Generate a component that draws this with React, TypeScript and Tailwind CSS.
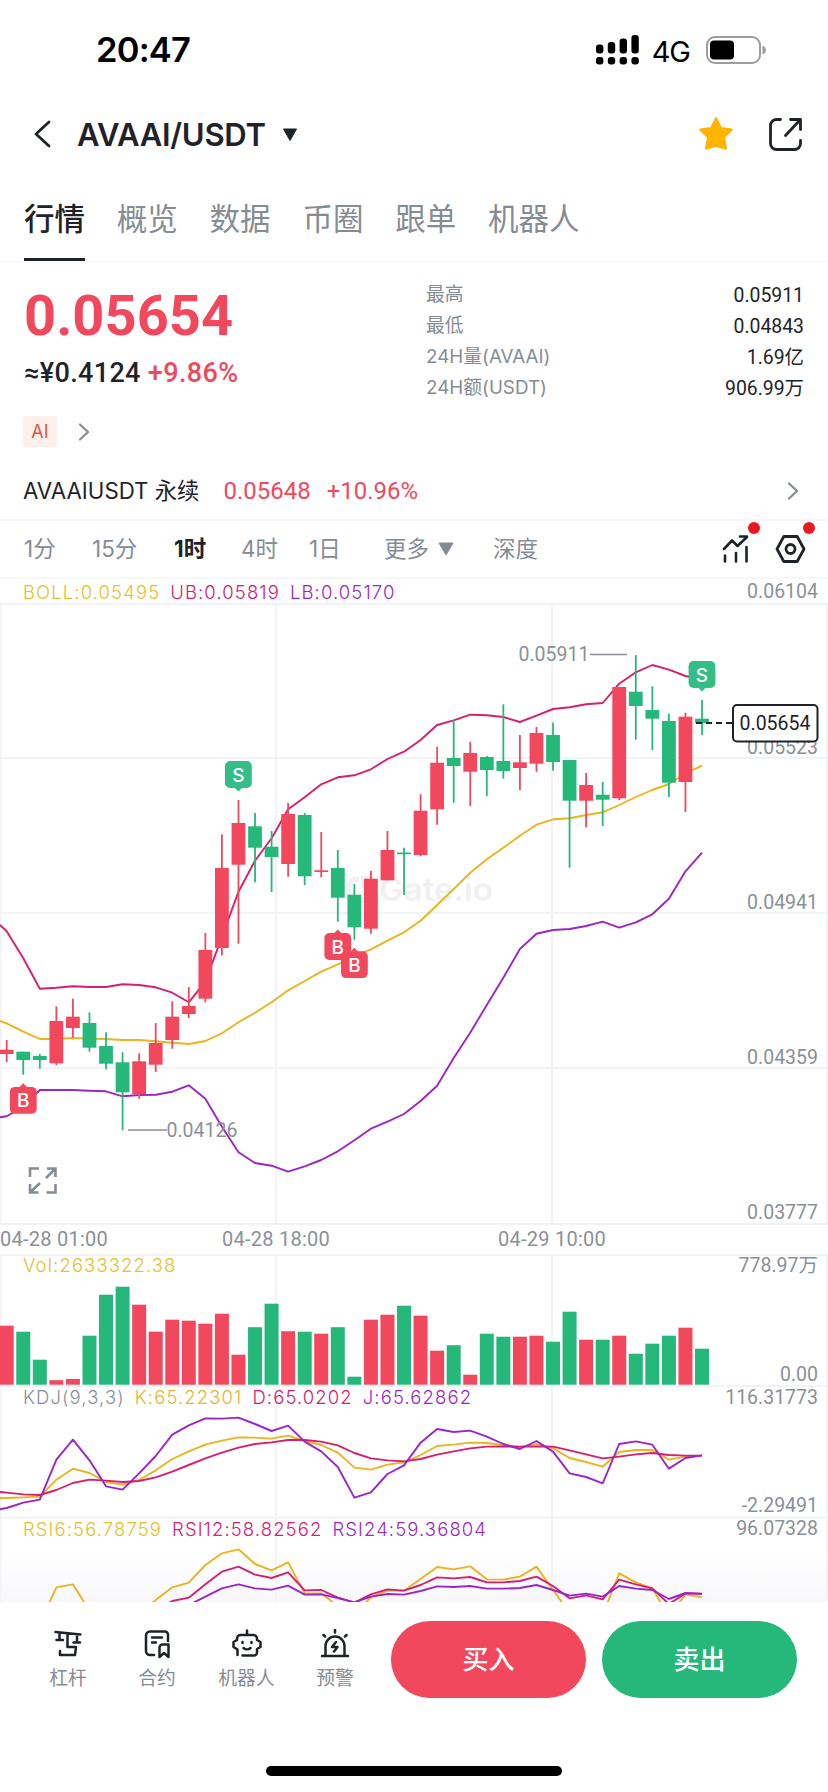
import React from 'react'

const UP = '#f1485d'
const DOWN = '#26b87a'
const YELLOW = '#ebb31d'
const PINK = '#d6206f'
const PURPLE = '#9a26c9'
const GRID = '#f2f3f7'

const STEP = 16.555
const cx = (i: number) => 6.7 + STEP * i

// [direction, high, body top, body bottom, low]
type Candle = [string, number, number, number, number]

const candles: Candle[] = [
  ['r', 1040, 1049.7, 1054, 1062],
  ['g', 1051.7, 1051.7, 1060, 1074.7],
  ['g', 1054, 1056, 1060, 1068.7],
  ['r', 1006.3, 1021, 1063.3, 1065.3],
  ['r', 998.7, 1016.7, 1028, 1037.7],
  ['g', 1012.3, 1023, 1047.7, 1051.7],
  ['g', 1032.3, 1046, 1063.7, 1069.3],
  ['g', 1052.3, 1062.3, 1092.3, 1130.3],
  ['r', 1053.3, 1061.3, 1094.3, 1098.7],
  ['r', 1023, 1043, 1064.7, 1072],
  ['r', 1001.3, 1016.7, 1040, 1048.7],
  ['r', 987, 1006, 1014, 1018],
  ['r', 933, 950, 998.7, 1002.3],
  ['r', 834.3, 868, 948, 955.3],
  ['r', 800, 823, 864.7, 943.7],
  ['g', 813, 826.3, 847.7, 882.3],
  ['g', 831, 846.7, 857, 892],
  ['r', 803, 814, 864, 876.7],
  ['g', 813, 815, 876.3, 885],
  ['r', 832, 870.3, 872, 877.3],
  ['g', 850, 868, 897.7, 921.7],
  ['g', 884, 894.7, 927.3, 939.7],
  ['r', 871, 878.7, 928.7, 933.7],
  ['r', 831, 850, 880.3, 880.3],
  ['g', 847.7, 852.5, 854.2, 895],
  ['r', 794.3, 810.7, 855, 856.3],
  ['r', 746.7, 762.7, 809.3, 824.7],
  ['g', 719.7, 758, 766, 802.7],
  ['r', 741.7, 753, 771.7, 806],
  ['g', 756, 757, 770, 796.3],
  ['g', 704.3, 761, 771, 778.7],
  ['r', 735, 762.3, 768, 790.3],
  ['r', 727, 733, 763.7, 771.7],
  ['g', 722.7, 735, 762, 770.7],
  ['g', 760, 760, 800.7, 867.7],
  ['r', 773, 785, 800.7, 827.3],
  ['g', 782, 794.7, 799.7, 826],
  ['r', 687, 687, 798.3, 800],
  ['g', 655, 691.7, 706, 739.7],
  ['g', 686.3, 710, 718.7, 750],
  ['g', 713.7, 721, 782.7, 797],
  ['r', 712.7, 716.7, 782, 812],
  ['g', 700, 718.7, 723, 735],
]

const upperBand = [931.3, 958.3, 988.7, 987.7, 986.3, 987, 987, 984.3, 985, 987.3, 992.7, 1002.3, 981.7, 937, 891.7, 860.7, 838.3, 809.3, 797.3, 784.3, 777.3, 775.3, 769.3, 759, 751.7, 740, 725, 720.3, 714.7, 715.3, 717, 722, 715.7, 709, 707.3, 704.3, 703, 683.7, 672.3, 665, 669.7, 676, 679]
const middleBand = [1023.3, 1031.7, 1039, 1039, 1038, 1038.7, 1039, 1040, 1040, 1041.3, 1042.7, 1044, 1041, 1033.3, 1022.3, 1012.7, 1002.3, 990.3, 981, 971.7, 964.3, 956, 949.3, 940.7, 932.3, 920.7, 905, 889, 872.7, 859.3, 847.7, 835.7, 824.7, 819.3, 818.3, 815, 812.3, 805, 797, 790, 784, 773.3, 765.7]
const lowerBand = [1116.3, 1106.7, 1090, 1090, 1090, 1090.7, 1091.3, 1096.3, 1095, 1094.7, 1091.7, 1085.3, 1098.7, 1126.7, 1152.3, 1163, 1165.7, 1171.7, 1166.3, 1160, 1151.3, 1140.3, 1128.7, 1121.7, 1114, 1101, 1085.7, 1058, 1032.7, 1005, 977.7, 949, 933.7, 930, 929, 926, 921.7, 927.7, 922.3, 914.3, 898.7, 871.3, 852.7]

const volumes = [59, 53, 25, 4.5, 5.7, 49, 90, 98, 80, 53, 65, 64, 61, 71, 30, 57.5, 81, 53.5, 53, 51, 57.5, 8, 65, 70, 79, 69, 34, 39.5, 10, 51, 48, 48, 49, 43, 73, 45, 45, 49, 31, 41, 49, 57, 36]

// oscillator series are kept in thirds of a pixel from the top of the volume pane
const kLine = [774, 772, 770, 719, 686, 699, 726, 734, 720, 691, 657, 634, 614, 602, 592, 593, 596, 587, 603, 615, 638, 683, 689, 674, 667, 645, 618, 614, 608, 609, 615, 621, 612, 625, 654, 666, 680, 636, 630, 630, 659, 650, 647]
const dLine = [758, 763, 765, 750, 729, 719, 722, 726, 723, 712, 695, 675, 655, 638, 623, 612, 607, 600, 600, 605, 616, 639, 655, 661, 664, 657, 644, 634, 625, 620, 619, 620, 619, 620, 631, 643, 655, 650, 643, 639, 645, 647, 647]
const jLine = [804, 788, 779, 659, 599, 661, 739, 749, 700, 648, 584, 556, 535, 536, 533, 552, 573, 557, 605, 634, 681, 773, 757, 702, 676, 608, 567, 576, 572, 590, 612, 627, 603, 635, 700, 711, 730, 612, 604, 614, 686, 654, 646]
const rsi6 = [1200, 1200, 1150, 1042, 1033, 1112, 1150, 1150, 1120, 1080, 1042, 1028, 975, 940, 928, 972, 991, 967, 1060, 1060, 1098, 1120, 1072, 1052, 1052, 1017, 981, 988, 979, 1018, 1019, 1010, 980, 1050, 1118, 1110, 1125, 1000, 1027, 1045, 1130, 1063, 1072]
const rsi12 = [1180, 1180, 1180, 1120, 1120, 1150, 1150, 1150, 1130, 1110, 1083, 1073, 1033, 995, 980, 1004, 1014, 997, 1051, 1050, 1073, 1088, 1063, 1048, 1052, 1035, 1012, 1015, 1011, 1027, 1027, 1023, 1010, 1038, 1075, 1066, 1078, 1019, 1033, 1045, 1092, 1060, 1062]
const rsi24 = [1180, 1180, 1180, 1120, 1120, 1150, 1150, 1150, 1130, 1120, 1110, 1095, 1070, 1045, 1033, 1045, 1049, 1037, 1064, 1063, 1074, 1087, 1070, 1062, 1064, 1053, 1039, 1041, 1038, 1046, 1046, 1044, 1035, 1050, 1067, 1061, 1070, 1038, 1046, 1050, 1077, 1059, 1061]

const points = (ys: number[], first: number) =>
  [`0,${first}`, ...ys.map((y, i) => `${cx(i).toFixed(1)},${y}`)].join(' ')
const subPoints = (ys: number[], first: number) =>
  points(ys.map((y) => 1240 + y / 3), 1240 + first / 3)

function Line({ pts, color }: { pts: string; color: string }) {
  return <polyline points={pts} fill="none" stroke={color} strokeWidth="1.9" strokeLinejoin="round" />
}

function Verticals({ top, bottom }: { top: number; bottom: number }) {
  return (
    <g stroke={GRID} strokeWidth="2">
      {[0.5, 276, 552, 827].map((x) => (
        <line key={x} x1={x} x2={x} y1={top} y2={bottom} />
      ))}
    </g>
  )
}

function AxisText({ y, children }: { y: number; children: string }) {
  return (
    <text x="818" y={y} textAnchor="end" fill="#8b9097" className="text-[19.5px] font-['Roboto','Noto_Sans_CJK_SC',sans-serif]">
      {children}
    </text>
  )
}

function Marker({ x, y, side }: { x: number; y: number; side: 'S' | 'B' }) {
  const sell = side === 'S'
  const color = sell ? '#34bd87' : '#f1485d'
  return (
    <g>
      <rect x={x - 13.4} y={y - 13.4} width="26.8" height="26.8" rx="5" fill={color} />
      <path
        d={sell ? `M${x - 4} ${y + 13}h8l-4 4z` : `M${x - 4} ${y - 13}h8l-4 -4z`}
        fill={color}
      />
      <text x={x} y={y + 7} textAnchor="middle" fill="#fff" className="text-[19px] font-medium font-['Inter',sans-serif]">
        {side}
      </text>
    </g>
  )
}

function StatusBar() {
  return (
    <div className="h-[100px] pl-[96px] pr-[62px] flex items-center justify-between text-black">
      <span className="text-[34.5px] font-semibold leading-none tracking-[-0.8px]">20:47</span>
      <div className="flex items-center">
        <svg width="44" height="30" viewBox="0 0 44 30">
          {[9, 11.5, 15, 18.5].map((h, i) => (
            <g key={i}>
              <rect x={i * 11.8} y={18.5 - h} width="7.4" height={h} rx="3" />
              <rect x={i * 11.8} y="22" width="7.4" height="7.6" rx="3" />
            </g>
          ))}
        </svg>
        <span className="ml-3 mt-[2px] text-[29px] leading-none tracking-[-1px]">4G</span>
        <svg className="ml-4" width="60" height="28" viewBox="0 0 60 28">
          <rect x="1" y="1" width="53" height="26" rx="8" fill="none" stroke="#9c9c9c" strokeWidth="2" />
          <rect x="4" y="4.5" width="24" height="19" rx="4" />
          <path d="M56.5 9.5c4.5 1.5 4.5 7.5 0 9z" fill="#9c9c9c" />
        </svg>
      </div>
    </div>
  )
}

function Header() {
  return (
    <header className="h-[68px] pl-[33px] pr-[25px] flex items-center">
      <svg width="19" height="28" viewBox="0 0 19 28" fill="none" stroke="#1f2329" strokeWidth="2.8" strokeLinecap="round" strokeLinejoin="round">
        <path d="M16 2 3 14l13 12" />
      </svg>
      <h1 className="ml-[25px] text-[31px] font-semibold leading-none tracking-[-0.25px]">AVAAI/USDT</h1>
      <svg className="ml-[16px]" width="16" height="13" viewBox="0 0 16 13">
        <path d="M1.5 1h13L8 12.5z" fill="#1f2329" stroke="#1f2329" strokeLinejoin="round" />
      </svg>
      <svg className="ml-auto" width="36" height="36" viewBox="0 0 36 36">
        <path d="m18 2.500 4.800 9.700 10.800 1.500-7.800 7.500 1.900 11.300L18 29.500l-9.700 3 1.900-11.300-7.800-7.500 10.800-1.500z" fill="#ffb400" stroke="#ffb400" strokeWidth="2.500" strokeLinejoin="round" />
      </svg>
      <svg className="ml-[34px]" width="35" height="35" viewBox="0 0 35 35" fill="none" stroke="#1f2329" strokeWidth="2.800" strokeLinecap="round" strokeLinejoin="round">
        <path d="M12.5 2.500H8.500a6 6 0 0 0-6 6v18a6 6 0 0 0 6 6h18a6 6 0 0 0 6-6V23.500" />
        <path d="M17.500 18.500 32 3M22.500 2.500h10V12.500" />
      </svg>
    </header>
  )
}

const tabs = ['行情', '概览', '数据', '币圈', '跟单', '机器人']

function Tabs() {
  return (
    <nav className="h-[95px] px-6 flex gap-[31.8px] border-b-2 border-[#f9fafb]">
      {tabs.map((tab, i) => (
        <a
          key={tab}
          href="#"
          className={
            i === 0
              ? 'h-[93px] pt-[35px] text-[30.5px] leading-[32px] font-medium text-[#1f2329] border-b-3 border-[#1f2329]'
              : 'h-[93px] pt-[35px] text-[30.5px] leading-[32px] text-[#868c94]'
          }
        >
          {tab}
        </a>
      ))}
    </nav>
  )
}

const stats = [
  ['最高', '0.05911'],
  ['最低', '0.04843'],
  ['24H量(AVAAI)', '1.69亿'],
  ['24H额(USDT)', '906.99万'],
]

function Chevron() {
  return (
    <svg width="12" height="18" viewBox="0 0 12 18" fill="none" stroke="#868c94" strokeWidth="2.2" strokeLinecap="round" strokeLinejoin="round">
      <path d="m2 1.500 8 7.500-8 7.500" />
    </svg>
  )
}

function Summary() {
  return (
    <section className="h-[141px] pl-6 pr-6 flex justify-between">
      <div className="font-['Roboto','Noto_Sans_CJK_SC',sans-serif]">
        <div className="mt-[25px] text-[56px] leading-[56px] font-bold text-[#f1485d]">0.05654</div>
        <div className="mt-[14px] text-[27px] leading-[30px] font-medium tracking-[0.35px]">
          ≈¥0.4124 <span className="text-[#f1485d]">+9.86%</span>
        </div>
      </div>
      <div className="w-[378px] mt-[17px]">
        {stats.map(([label, value]) => (
          <div key={label} className="h-[31px] flex items-center justify-between leading-none">
            <span className="text-[18.8px] text-[#868c94]">{label}</span>
            <span className="text-[19.4px] font-['Roboto','Noto_Sans_CJK_SC',sans-serif]">{value}</span>
          </div>
        ))}
      </div>
    </section>
  )
}

function Timeframes() {
  return (
    <div className="h-[60px] pl-6 pr-[22px] flex items-center text-[22.5px] leading-none text-[#868c94] border-y-2 border-[#f6f7f9]">
      <span className="w-[68px]">1分</span>
      <span className="w-[82px]">15分</span>
      <span className="w-[67px] font-bold text-[#1f2329]">1时</span>
      <span className="w-[68px]">4时</span>
      <span className="w-[75px]">1日</span>
      <span>更多</span>
      <svg className="ml-[9px]" width="16" height="14" viewBox="0 0 16 14">
        <path d="M1 1h14L8 13z" fill="#868c94" stroke="#868c94" strokeLinejoin="round" />
      </svg>
      <span className="ml-[39px]">深度</span>
      <div className="ml-auto relative">
        <svg width="27" height="30" viewBox="0 0 27 30" fill="none" stroke="#1f2329" strokeWidth="2.6" strokeLinecap="round" strokeLinejoin="round">
          <path d="m2 15 8-8.500L15.500 12 25 3M18 2.500h7M3 21.500v6M14 19v8.500M24.500 13v14.500" />
        </svg>
        <span className="absolute -top-[12px] left-[26px] w-3 h-3 rounded-full bg-[#e8191f]" />
      </div>
      <div className="ml-[26px] relative">
        <svg width="31" height="30" viewBox="0 0 31 30" fill="none" stroke="#1f2329" strokeWidth="2.8" strokeLinejoin="round">
          <path d="M8.800 2.500h13.400L29 15l-6.800 12.500H8.800L2 15z" />
          <circle cx="15.5" cy="15" r="4.5" />
        </svg>
        <span className="absolute -top-[12px] left-[28px] w-3 h-3 rounded-full bg-[#e8191f]" />
      </div>
    </div>
  )
}

function PriceChart() {
  return (
    <svg className="block" width="828" height="620" viewBox="0 603 828 620">
      <Verticals top={603} bottom={1223} />
      <g stroke={GRID} strokeWidth="2">
        {[604, 758, 913, 1068].map((y) => (
          <line key={y} x1="0" x2="828" y1={y} y2={y} />
        ))}
      </g>
      <g fill="#f1f1f3">
        <path d="M359 876a14 14 0 1 0 14 14h-6a8 8 0 1 1-8-8z" />
        <path d="M361 876h12v12h-12z" />
        <text x="379" y="901" className="text-[33px] font-semibold font-['Inter',sans-serif]">Gate.io</text>
      </g>
      <AxisText y={753.5}>0.05523</AxisText>
      <AxisText y={908.5}>0.04941</AxisText>
      <AxisText y={1063.5}>0.04359</AxisText>
      <AxisText y={1218.5}>0.03777</AxisText>
      <Line pts={points(middleBand, 1021)} color={YELLOW} />
      <Line pts={points(upperBand, 925)} color={PINK} />
      <Line pts={points(lowerBand, 1117.3)} color={PURPLE} />
      {candles.map(([dir, high, top, bottom, low], i) => (
        <g key={i} fill={dir === 'r' ? UP : DOWN}>
          <rect x={cx(i) - 0.9} y={high} width="1.8" height={low - high} />
          <rect x={cx(i) - 6.9} y={top} width="13.8" height={bottom - top} />
        </g>
      ))}
      <g className="text-[19.5px] font-['Roboto',sans-serif]" fill="#8b9097">
        <text x="518.5" y="661">0.05911</text>
        <text x="166.5" y="1137">0.04126</text>
        <path d="M590 654.500h37M128 1130h39" stroke="#8b9097" strokeWidth="1.5" />
      </g>
      <path d="M696 723h36" stroke="#1f2329" strokeWidth="2" strokeDasharray="6 4" />
      <Marker x={238.4} y={774.5} side="S" />
      <Marker x={702} y={674.5} side="S" />
      <Marker x={23.3} y={1100.3} side="B" />
      <Marker x={337.8} y={946.5} side="B" />
      <Marker x={354.4} y={964.7} side="B" />
      <rect x="733" y="705" width="84.5" height="36.5" rx="4" fill="#fff" stroke="#1f2329" strokeWidth="2" />
      <text x="775" y="730" textAnchor="middle" fill="#1f2329" className="text-[19.5px] font-['Roboto',sans-serif]">0.05654</text>
      <g fill="none" stroke="#868c94" strokeWidth="2.6">
        <path d="M30 1177v-8.500h9M47 1168.500h8.500v8.500M55.500 1184v8.500h-9M38.500 1192.500H30V1184M46 1178l9-9M30.500 1192l9.500-9" />
      </g>
    </svg>
  )
}

type LegendItem = [string, string]

function Legend({ items }: { items: LegendItem[] }) {
  return (
    <div className="flex gap-[10px] text-[18.5px] leading-[22px] font-light tracking-[1.1px]">
      {items.map(([text, color]) => (
        <span key={text} style={{ color }}>{text}</span>
      ))}
    </div>
  )
}

function Indicators() {
  return (
    <div className="relative h-[348px]">
      <svg className="block" width="828" height="348" viewBox="0 1254 828 348">
        <defs>
          <linearGradient id="fade" x1="0" x2="0" y1="0" y2="1">
            <stop offset="0" stopColor="#fff" />
            <stop offset="1" stopColor="#f8f8fb" />
          </linearGradient>
        </defs>
        <rect x="0" y="1550" width="828" height="52" fill="url(#fade)" />
        <Verticals top={1254} bottom={1602} />
        <g stroke={GRID} strokeWidth="2">
          <path d="M0 1255h828M0 1386h828M0 1517.500h828" />
        </g>
        {volumes.map((v, i) => (
          <rect key={i} x={cx(i) - 7} y={1384.7 - v} width="14" height={v} fill={candles[i][0] === 'r' ? UP : DOWN} />
        ))}
        <Line pts={subPoints(kLine, 774)} color={YELLOW} />
        <Line pts={subPoints(dLine, 756)} color={PINK} />
        <Line pts={subPoints(jLine, 808)} color={PURPLE} />
        <Line pts={subPoints(rsi6, 1200)} color={YELLOW} />
        <Line pts={subPoints(rsi12, 1180)} color={PINK} />
        <Line pts={subPoints(rsi24, 1180)} color={PURPLE} />
        <AxisText y={1272}>778.97万</AxisText>
        <AxisText y={1380.5}>0.00</AxisText>
        <AxisText y={1404}>116.31773</AxisText>
        <AxisText y={1512}>-2.29491</AxisText>
        <AxisText y={1535}>96.07328</AxisText>
      </svg>
      <div className="absolute left-[23px] top-0">
        <Legend items={[['Vol:2633322.38', '#e6c02e']]} />
      </div>
      <div className="absolute left-[23px] top-[132px]">
        <Legend items={[['KDJ(9,3,3)', '#8b9097'], ['K:65.22301', '#e6b62e'], ['D:65.0202', PINK], ['J:65.62862', PURPLE]]} />
      </div>
      <div className="absolute left-[23px] top-[264px]">
        <Legend items={[['RSI6:56.78759', '#e6c02e'], ['RSI12:58.82562', PINK], ['RSI24:59.36804', PURPLE]]} />
      </div>
    </div>
  )
}

function NavIcon({ children }: { children: React.ReactNode }) {
  return (
    <svg width="32" height="30" viewBox="0 0 32 30" fill="none" stroke="#1f2329" strokeWidth="2.5" strokeLinecap="round" strokeLinejoin="round">
      {children}
    </svg>
  )
}

function BottomBar() {
  return (
    <footer className="h-[190px] bg-white">
      <div className="pt-[19px] pl-6 pr-[31px] flex items-start">
        <div className="flex pt-[8px] text-[18.8px] leading-[22px] text-[#868c94]">
          <div className="w-[88px] flex flex-col items-center gap-[9px]">
            <NavIcon>
              <path d="M3.500 3 28.500 5.500M7.500 4v7M4.500 11H11M25 6v7.500M21.500 13.500H28M15.500 4.500V18h8.500l-1 8H8v-4" />
            </NavIcon>
            杠杆
          </div>
          <div className="w-[90px] flex flex-col items-center gap-[9px]">
            <NavIcon>
              <path d="M13 26H9a4 4 0 0 1-4-4V6.500a4 4 0 0 1 4-4h15a3 3 0 0 1 3 3V12M11 8.500h10M11 13.500h4M18.500 28V18.500M18.500 28l4.500-4 4.500 4V15.500h-6a3 3 0 0 0-3 3" />
            </NavIcon>
            合约
          </div>
          <div className="w-[89px] flex flex-col items-center gap-[9px]">
            <NavIcon>
              <path d="M16 1.500V6M6.500 26v-5.500L2.500 18v-5L6 11V9.500A3.500 3.500 0 0 1 9.500 6h13A3.500 3.500 0 0 1 26 9.500V11l3.500 2v5L26 20v3.500a3 3 0 0 1-3 3H11.500M11.500 13v1M20.500 13v1M12.500 19c2 1.800 5 1.800 7 0" />
            </NavIcon>
            机器人
          </div>
          <div className="w-[88px] flex flex-col items-center gap-[9px]">
            <NavIcon>
              <path d="M3 27h26M6.500 27V17a9.500 9.500 0 0 1 19 0v10M16 1v2.500M4.500 6l1.500 1.500M27.500 6 26 7.500M17 13l-4 5h5.500l-3.500 4.500" />
            </NavIcon>
            预警
          </div>
        </div>
        <button className="ml-auto w-[195px] h-[77px] rounded-full bg-[#f1485d] text-white text-[26px] font-medium">买入</button>
        <button className="ml-4 w-[195px] h-[77px] rounded-full bg-[#26b87a] text-white text-[26px] font-medium">卖出</button>
      </div>
      <div className="mt-[68px] mx-auto w-[296px] h-[10px] rounded-full bg-black" />
    </footer>
  )
}

export default function App() {
  return (
    <div className="w-[828px] h-[1792px] overflow-hidden bg-white text-[#1f2329] font-['Inter','Noto_Sans_CJK_SC',sans-serif]">
      <StatusBar />
      <Header />
      <Tabs />
      <Summary />
      <div className="h-[55px] pl-[23px] flex items-center">
        <span className="w-[34px] h-[31px] rounded-[3px] bg-[#fdf0ec] text-[#e0583a] text-[18px] leading-[31px] text-center">AI</span>
        <span className="ml-[21px]"><Chevron /></span>
      </div>
      <div className="h-[60px] pt-1 pl-[23px] pr-[29px] flex items-center text-[22.3px] leading-none">
        <span>AVAAIUSDT 永续</span>
        <span className="ml-6 text-[#f1485d] font-['Roboto',sans-serif] text-[24px]">0.05648</span>
        <span className="ml-4 text-[#f1485d] font-['Roboto',sans-serif] text-[24px]">+10.96%</span>
        <span className="ml-auto"><Chevron /></span>
      </div>
      <Timeframes />
      <div className="h-[24px] pt-px pl-[23px] pr-[10px] flex items-center justify-between">
        <Legend items={[['BOLL:0.05495', '#e6c02e'], ['UB:0.05819', PINK], ['LB:0.05170', PURPLE]]} />
        <span className="text-[19.5px] leading-none text-[#8b9097] font-['Roboto',sans-serif]">0.06104</span>
      </div>
      <PriceChart />
      <div className="h-[31px] pb-[2px] border-t-2 border-[#f2f3f7] flex items-center text-[20px] leading-none tracking-[0.25px] text-[#8b9097] font-['Roboto',sans-serif]">
        <span className="w-[222px]">04-28 01:00</span>
        <span className="w-[276px]">04-28 18:00</span>
        <span>04-29 10:00</span>
      </div>
      <Indicators />
      <BottomBar />
    </div>
  )
}
